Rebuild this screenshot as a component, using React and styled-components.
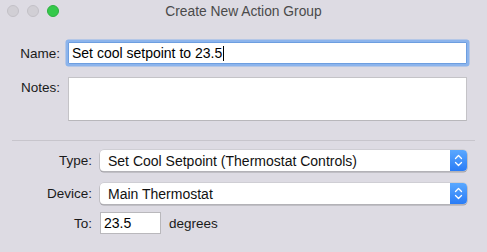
import React from 'react';
import styled, { createGlobalStyle } from 'styled-components';

const WINDOW_BG = '#dddbe3';
const FONT = '"Liberation Sans", Arial, sans-serif';

const GlobalStyle = createGlobalStyle`
  html, body {
    margin: 0;
    padding: 0;
    background: ${WINDOW_BG};
  }
  * { box-sizing: border-box; }
`;

const Window = styled.div`
  width: 487px;
  height: 252px;
  background: ${WINDOW_BG};
  font-family: ${FONT};
  font-size: 13.5px;
  color: #1a1a1a;
  overflow: hidden;
  display: flex;
  flex-direction: column;
`;

const TitleBar = styled.div`
  height: 22px;
  position: relative;
  display: flex;
  align-items: center;
  justify-content: center;
`;

const Lights = styled.div`
  position: absolute;
  left: 7px;
  top: 5px;
  display: flex;
  gap: 8px;
`;

const Light = styled.span`
  width: 12px;
  height: 12px;
  border-radius: 50%;
  background: ${({ color }) => color || '#d1cfd5'};
  border: 1px solid ${({ border }) => border || '#c3c1c7'};
`;

const Title = styled.div`
  color: #4a4a4a;
  font-size: 13.8px;
  margin-top: 1px;
`;

const Body = styled.div`
  padding: 20px 12px 0 12px;
  display: flex;
  flex-direction: column;
`;

const Row = styled.div`
  display: flex;
  align-items: ${({ top }) => (top ? 'flex-start' : 'center')};
  gap: 8px;
  margin-top: ${({ gap }) => gap || 0}px;
`;

const Label = styled.label`
  width: ${({ width }) => width}px;
  flex: none;
  text-align: right;
  margin-top: ${({ top }) => (top ? '3px' : '0')};
  color: #1a1a1a;
  white-space: nowrap;
`;

const TextField = styled.div`
  height: 22px;
  background: #fff;
  border: 1px solid ${({ focused }) => (focused ? '#6d9ee0' : '#b9b8bc')};
  box-shadow: ${({ focused }) => (focused ? '0 0 0 2.5px #8cb4ec' : 'none')};
  border-radius: ${({ focused }) => (focused ? '1px' : '0')};
  padding: 0 3px;
  display: flex;
  align-items: center;
  color: #000;
  font-size: 14px;
  width: ${({ width }) => width}px;
  flex: none;
`;

const Caret = styled.span`
  display: inline-block;
  width: 1px;
  height: 15px;
  background: #000;
  margin-left: 1px;
`;

const NotesArea = styled.div`
  width: 399px;
  height: 44px;
  background: #fff;
  border: 1px solid #c4c3c7;
  border-bottom-color: #b8b7bb;
`;

const Separator = styled.div`
  height: 1px;
  background: #c7c5cc;
  margin: 19px 0 9px 0;
`;

const Popup = styled.div`
  width: 367px;
  height: 21px;
  background: #fff;
  border-radius: 4px;
  box-shadow: 0 0 0 0.5px #c2c1c6, 0 1px 0 0.5px #a4a3a8;
  display: flex;
  align-items: stretch;
  overflow: hidden;
`;

const PopupText = styled.div`
  flex: 1;
  padding-left: 8px;
  display: flex;
  align-items: center;
  color: #111;
  font-size: 14px;
`;

const Stepper = styled.div`
  width: 17px;
  background: linear-gradient(#5aa8ff, #2a7cf6);
  display: flex;
  align-items: center;
  justify-content: center;
`;

const Unit = styled.span`
  color: #1a1a1a;
`;

const Chevrons = () => (
  <svg width="9" height="13" viewBox="0 0 9 13" fill="none" stroke="#fff" strokeWidth="1.3" strokeLinecap="round" strokeLinejoin="round">
    <polyline points="1.5 4.5 4.5 1.5 7.5 4.5" />
    <polyline points="1.5 8.5 4.5 11.5 7.5 8.5" />
  </svg>
);

const App = () => (
  <>
    <GlobalStyle />
    <Window>
      <TitleBar>
        <Lights>
          <Light />
          <Light />
          <Light color="#35c94b" border="#2db040" />
        </Lights>
        <Title>Create New Action Group</Title>
      </TitleBar>
      <Body>
        <Row>
          <Label width={48}>Name:</Label>
          <TextField focused width={399}>
            Set cool setpoint to 23.5<Caret />
          </TextField>
        </Row>
        <Row top gap={13}>
          <Label width={48} top>Notes:</Label>
          <NotesArea />
        </Row>
        <Separator />
        <Row>
          <Label width={80}>Type:</Label>
          <Popup>
            <PopupText>Set Cool Setpoint (Thermostat Controls)</PopupText>
            <Stepper><Chevrons /></Stepper>
          </Popup>
        </Row>
        <Row gap={12}>
          <Label width={80}>Device:</Label>
          <Popup>
            <PopupText>Main Thermostat</PopupText>
            <Stepper><Chevrons /></Stepper>
          </Popup>
        </Row>
        <Row gap={8}>
          <Label width={80}>To:</Label>
          <TextField width={61}>23.5</TextField>
          <Unit>degrees</Unit>
        </Row>
      </Body>
    </Window>
  </>
);

export default App;
